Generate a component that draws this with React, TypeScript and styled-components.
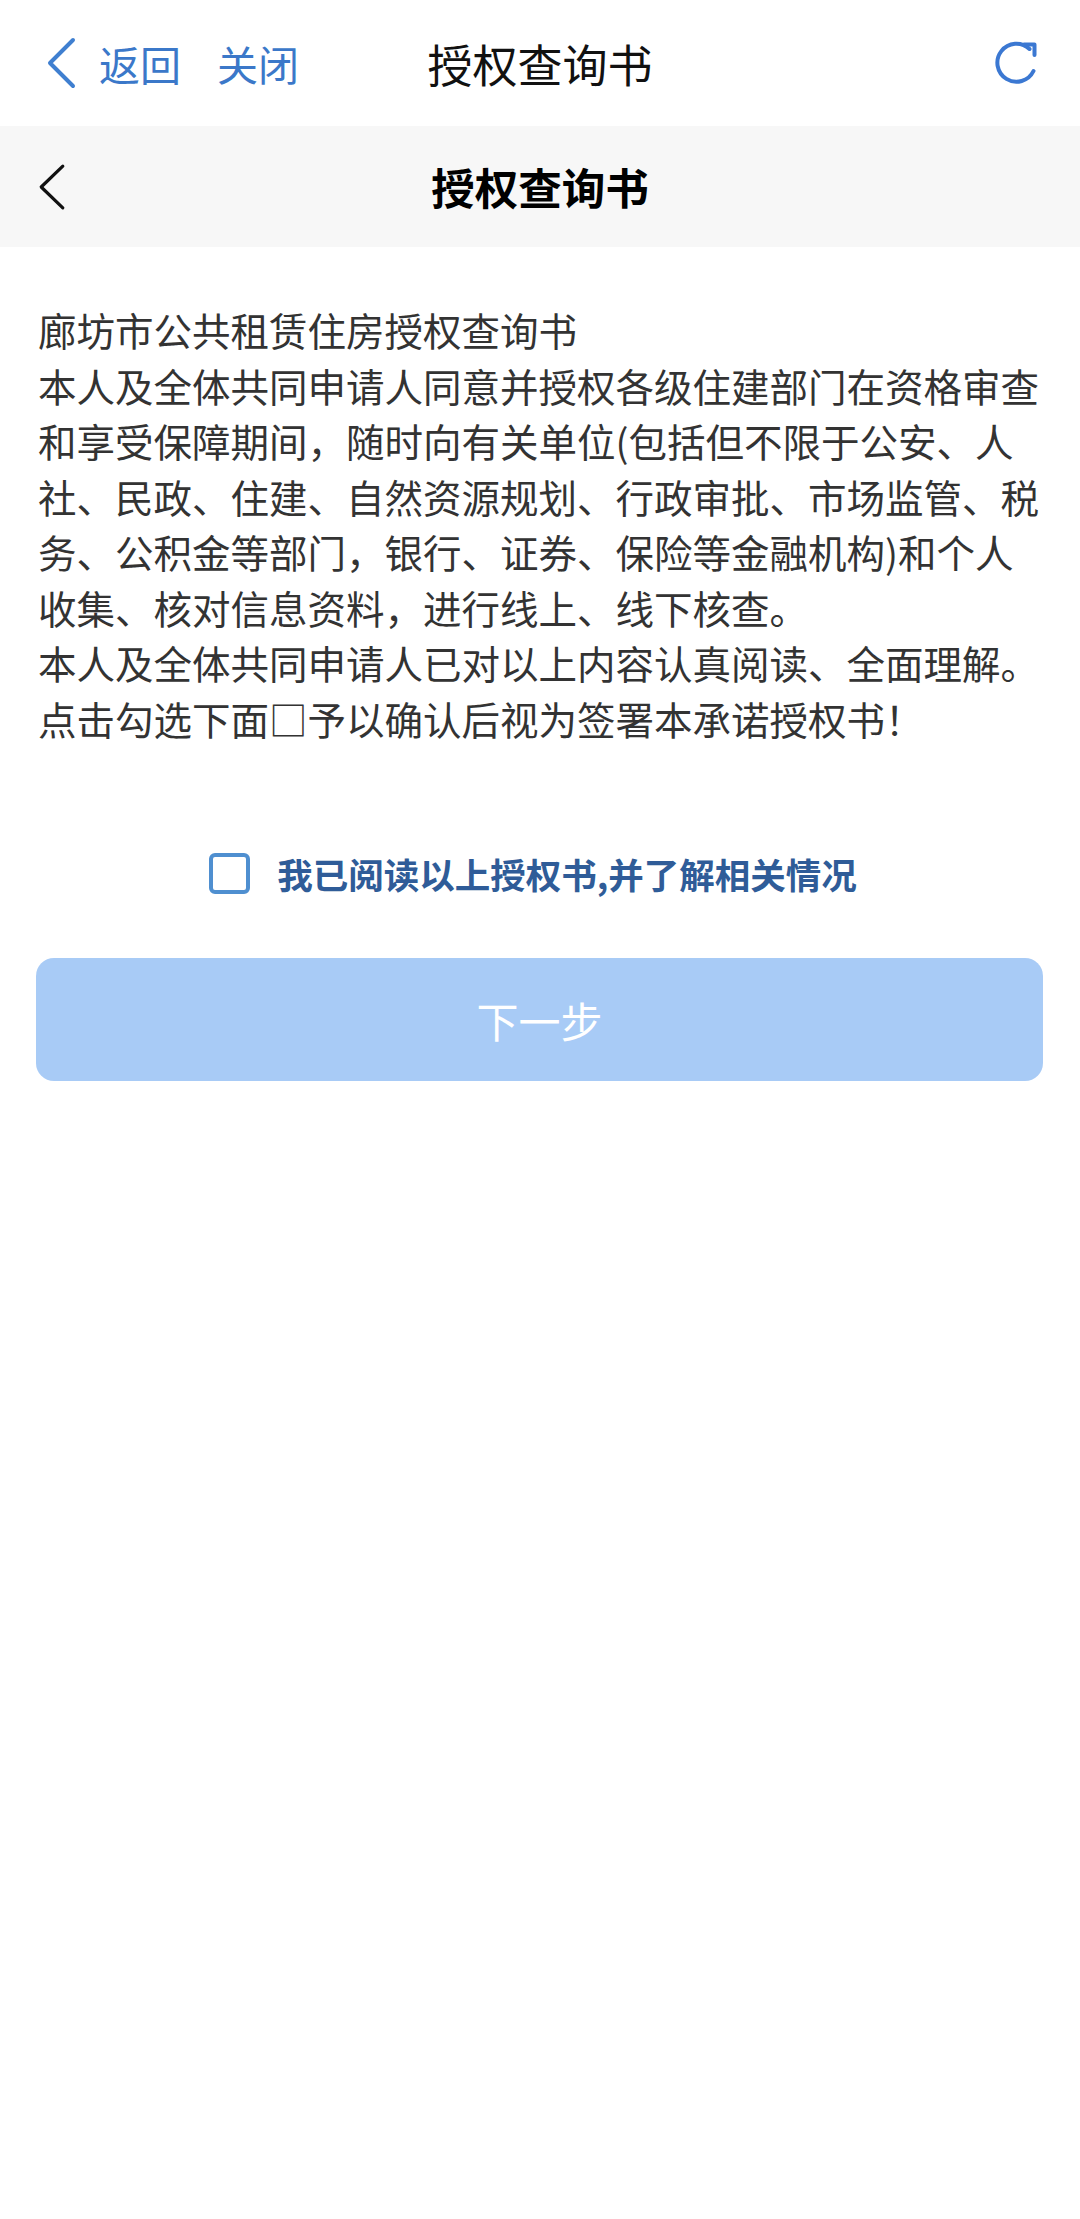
import React from "react";
import styled, { createGlobalStyle } from "styled-components";

const GlobalStyle = createGlobalStyle`
  html, body {
    margin: 0;
    padding: 0;
    background: #ffffff;
  }
  body {
    font-family: "Noto Sans CJK SC", "Noto Sans", sans-serif;
    -webkit-font-smoothing: antialiased;
  }
`;

const Page = styled.div`
  width: 1080px;
  min-height: 2219px;
  background: #ffffff;
  display: flex;
  flex-direction: column;
`;

const NavBar = styled.header<{ $gray?: boolean }>`
  display: grid;
  grid-template-columns: 1fr auto 1fr;
  align-items: center;
  height: ${(p) => (p.$gray ? "121px" : "126px")};
  background: ${(p) => (p.$gray ? "#f7f7f7" : "#ffffff")};
`;

const LeftGroup = styled.div<{ $pad: number }>`
  display: flex;
  align-items: center;
  padding-left: ${(p) => p.$pad}px;
`;

const RightGroup = styled.div`
  display: flex;
  justify-content: flex-end;
  padding-right: 40px;
`;

const NavLink = styled.span<{ $ml: number }>`
  margin-left: ${(p) => p.$ml}px;
  font-size: 41px;
  line-height: 1;
  color: #3b78c9;
`;

const NavTitle = styled.h1<{ $bold?: boolean }>`
  margin: 0;
  font-size: ${(p) => (p.$bold ? "43.5px" : "45px")};
  font-weight: ${(p) => (p.$bold ? 700 : 400)};
  color: ${(p) => (p.$bold ? "#000000" : "#111111")};
  line-height: 1;
  letter-spacing: 0;
`;

const IconButton = styled.span`
  display: flex;
  align-items: center;
  justify-content: center;
`;

const Content = styled.main`
  padding: 55px 38px 0;
`;

const Para = styled.p`
  margin: 0;
  font-size: 38.5px;
  line-height: 55.5px;
  color: #333333;
`;

const AgreeRow = styled.label`
  display: flex;
  align-items: center;
  justify-content: center;
  gap: 27px;
  margin-top: 107px;
  padding-right: 14px;
  height: 41px;
`;

const CheckBox = styled.span`
  width: 41px;
  height: 41px;
  box-sizing: border-box;
  border: 4px solid #4f8fd0;
  border-radius: 6px;
  background: #ffffff;
  flex: none;
`;

const AgreeText = styled.span`
  font-size: 35.5px;
  font-weight: 700;
  color: #2f5c98;
  line-height: 1;
`;

const NextButton = styled.button`
  margin: 64px 37px 0 36px;
  height: 123px;
  border: none;
  border-radius: 18px;
  background: #a8cbf6;
  color: #ffffff;
  font-family: "Noto Sans CJK SC", "Noto Sans", sans-serif;
  font-size: 42px;
  font-weight: 400;
  display: flex;
  align-items: center;
  justify-content: center;
  padding: 0;
`;

const Chevron = ({ color, w, h, sw }: { color: string; w: number; h: number; sw: number }) => (
  <svg width={w} height={h} viewBox={`0 0 ${w} ${h}`} fill="none">
    <polyline
      points={`${w - sw} ${sw} ${sw} ${h / 2} ${w - sw} ${h - sw}`}
      stroke={color}
      strokeWidth={sw}
      strokeLinecap="round"
      strokeLinejoin="round"
    />
  </svg>
);

const RefreshIcon = () => (
  <svg width="46" height="46" viewBox="0 0 46 46" fill="none">
    <path
      d="M39.5 31 A19 19 0 1 1 35.5 9"
      stroke="#3b78d2"
      strokeWidth="4"
      strokeLinecap="round"
      fill="none"
    />
    <polyline
      points="30 4.5 40.5 4.5 40.5 15"
      stroke="#3b78d2"
      strokeWidth="4"
      strokeLinecap="round"
      strokeLinejoin="round"
      fill="none"
    />
  </svg>
);

export default function App() {
  return (
    <Page>
      <GlobalStyle />
      <NavBar>
        <LeftGroup $pad={46}>
          <Chevron color="#3f7fd0" w={31} h={54} sw={4} />
          <NavLink $ml={22}>返回</NavLink>
          <NavLink $ml={36}>关闭</NavLink>
        </LeftGroup>
        <NavTitle>授权查询书</NavTitle>
        <RightGroup>
          <IconButton>
            <RefreshIcon />
          </IconButton>
        </RightGroup>
      </NavBar>
      <NavBar $gray>
        <LeftGroup $pad={38}>
          <Chevron color="#111111" w={28} h={48} sw={3.2} />
        </LeftGroup>
        <NavTitle $bold>授权查询书</NavTitle>
        <div />
      </NavBar>
      <Content>
        <Para>廊坊市公共租赁住房授权查询书</Para>
        <Para>
          本人及全体共同申请人同意并授权各级住建部门在资格审查和享受保障期间，随时向有关单位(包括但不限于公安、人社、民政、住建、自然资源规划、行政审批、市场监管、税务、公积金等部门，银行、证券、保险等金融机构)和个人收集、核对信息资料，进行线上、线下核查。
        </Para>
        <Para>本人及全体共同申请人已对以上内容认真阅读、全面理解。</Para>
        <Para>点击勾选下面□予以确认后视为签署本承诺授权书！</Para>
      </Content>
      <AgreeRow>
        <CheckBox />
        <AgreeText>我已阅读以上授权书,并了解相关情况</AgreeText>
      </AgreeRow>
      <NextButton>下一步</NextButton>
    </Page>
  );
}
